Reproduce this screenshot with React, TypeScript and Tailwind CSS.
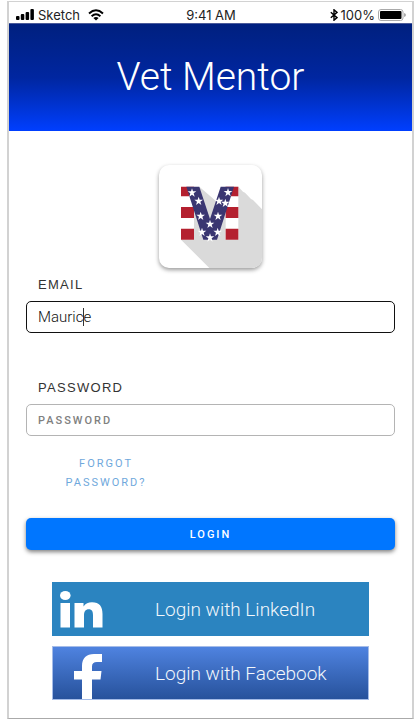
import React from "react";

const STARS: [number, number][] = [
  [141, 113], [161, 138], [167, 183], [195, 207], [171, 231], [195, 248],
  [219, 183], [241, 144], [249, 112], [222, 138], [218, 231],
];

const STAR_PATH = "M0-13 3-4 13-4 5 2 8 12 0 6-8 12-5 2-13-4-3-4Z";

function Logo() {
  return (
    <svg viewBox="42 30 309 309" className="size-full" role="img" aria-label="Vet Mentor logo">
      <path d="M163 95 212 137 240 95H280L294 110 300 113 318 132 324 135 351 163V339H193L108 254 150 150Z" fill="#dadada" />
      <path d="M108 95H147V254H108ZM242 95H280V254H242Z" fill="#fff" />
      <path
        d="M108 95H147V124H108ZM108 156H147V189H108ZM108 221H147V254H108ZM242 95H280V124H242ZM242 156H280V189H242ZM242 221H280V254H242Z"
        fill="#b4202f"
      />
      <path d="M124 95H163L195 192 227 95H267L216 254H175Z" fill="#3a3671" />
      <g fill="#fff">
        {STARS.map(([x, y]) => (
          <path key={`${x}-${y}`} d={STAR_PATH} transform={`translate(${x} ${y})`} />
        ))}
      </g>
    </svg>
  );
}

function StatusBar() {
  return (
    <div className="grid h-[21px] grid-cols-[1fr_auto_1fr] items-center pt-1 pr-[6px] pl-[7px] font-['Inter',sans-serif] text-[13px] leading-4 text-[#222]">
      <div className="flex items-center gap-1">
        <svg viewBox="0 0 18 11" className="h-[11px] w-[18px]" fill="#000">
          <rect x="0" y="7" width="3.500" height="4" rx="1" />
          <rect x="4.800" y="5" width="3.500" height="6" rx="1" />
          <rect x="9.600" y="3" width="3.500" height="8" rx="1" />
          <rect x="14.400" y="0" width="3.500" height="11" rx="1" />
        </svg>
        <span>Sketch</span>
        <svg viewBox="0 0 16 12" className="ml-1 h-3 w-4" fill="none" stroke="#000" strokeWidth="2">
          <path d="M1 4.4Q8-1.8 15 4.4M3.6 7.2Q8 3.4 12.4 7.2" />
          <path d="M8 11.6 5.4 9Q8 7 10.6 9Z" fill="#000" stroke="none" />
        </svg>
      </div>
      <span>9:41 AM</span>
      <div className="flex items-center justify-end gap-[3px]">
        <svg viewBox="0 0 8 12" className="h-3 w-2" fill="none" stroke="#000" strokeWidth="1.4">
          <path d="M.8 3.2 7 8.6 4 11.2V.8L7 3.4.8 8.8" />
        </svg>
        <span>100%</span>
        <svg viewBox="0 0 28 12" className="h-3 w-7">
          <rect x=".5" y=".5" width="24.5" height="11" rx="2.5" fill="#fff" stroke="#aaa" />
          <rect x="2" y="2" width="21.5" height="8" rx="1" fill="#000" />
          <path d="M26 4Q28 4.500 28 6T26 8Z" fill="#aaa" />
        </svg>
      </div>
    </div>
  );
}

export default function App() {
  return (
    <main className="mt-px mr-[6px] ml-[7px] border-x-2 border-t border-b border-[#d2d2d2] border-b-[#aaa] bg-white font-['Liberation_Sans',Arial,sans-serif]">
      <StatusBar />
      <header className="flex h-[108px] items-center justify-center border-t border-[#4a5a9a] bg-linear-to-b from-[#00207f] via-[#0026a0] to-[#003fff] pb-[2px]">
        <h1 className="font-['Roboto',sans-serif] text-[39px] leading-[44px] font-light text-white">Vet Mentor</h1>
      </header>

      <form className="flex flex-col px-[17px] pb-[18px]" onSubmit={(e) => e.preventDefault()}>
        <div className="mt-[34px] size-[103px] self-center overflow-hidden rounded-[10px] bg-white shadow-[0_2px_4px_rgba(0,0,0,0.4)]">
          <Logo />
        </div>

        <label htmlFor="email" className="mt-[7px] pl-3 text-[13px] leading-5 tracking-widest text-[#333]">
          EMAIL
        </label>
        <div className="relative mt-[6px]">
          <input
            id="email"
            type="text"
            defaultValue="Maurice"
            className="block h-8 w-full rounded-[5px] border border-[#111] bg-white px-[11px] font-['Roboto',sans-serif] text-[15px] font-light text-[#111] outline-none"
          />
          <span className="absolute top-[7px] left-[57px] h-[18px] w-px bg-[#333]" />
        </div>

        <label htmlFor="password" className="mt-[45px] pl-3 text-[13px] leading-5 tracking-widest text-[#333]">
          PASSWORD
        </label>
        <input
          id="password"
          type="password"
          placeholder="PASSWORD"
          className="mt-[6px] block h-8 w-full rounded-[5px] border border-[#b4b4b4] bg-white px-[11px] font-['Roboto',sans-serif] text-[11px] font-medium tracking-[2px] text-[#222] outline-none placeholder:text-[#808080]"
        />

        <a
          href="#forgot"
          className="mt-[18px] ml-[29px] w-[102px] text-center font-['Roboto',sans-serif] text-[11px] leading-[19px] tracking-[2px] text-[#6fa8dc]"
        >
          FORGOT PASSWORD?
        </a>

        <button
          type="submit"
          className="mt-[26px] h-8 rounded-[5px] bg-[#0076ff] pt-px font-['Roboto',sans-serif] text-[11px] leading-4 font-medium tracking-[2px] text-white shadow-[0_2px_4px_rgba(0,0,0,0.5)]"
        >
          LOGIN
        </button>

        <div className="mx-[26px] mt-8 flex flex-col gap-[10px] font-['Roboto',sans-serif] text-[19px] font-light text-[#f2f7fc]">
          <button type="button" className="flex h-[54px] items-center bg-[#2b84c0] pl-2 text-left">
            <svg viewBox="0 0 43 37" className="h-[37px] w-[43px]" fill="#fff">
              <ellipse cx="5.300" cy="4.500" rx="5.300" ry="4.500" />
              <path d="M.5 12H10V36.500H.5ZM14.500 12H23.500V15.500C25.500 12.600 28.300 11.300 32 11.300 39.500 11.300 42.500 15.500 42.500 23V36.500H33V24.500C33 20.500 32 18.300 28.800 18.300 25.500 18.300 24 20.500 24 24.500V36.500H14.500Z" />
            </svg>
            <span className="ml-[52px] pt-[3px]">Login with LinkedIn</span>
          </button>
          <button
            type="button"
            className="flex h-[54px] items-end border border-[#a5bce8] bg-linear-to-b from-[#4f83e0] to-[#27529c] pl-[21px] text-left"
          >
            <svg viewBox="0 0 28 45" className="h-[45px] w-7" fill="#fff">
              <path d="M8 45V25.500H0V17H8V12C8 4 12.500 0 20 0H28V8H23C19.500 8 18 9.500 18 12.500V17H27.500L26.500 25.500H18V45Z" />
            </svg>
            <span className="ml-[53px] self-center pt-[3px]">Login with Facebook</span>
          </button>
        </div>
      </form>
    </main>
  );
}
